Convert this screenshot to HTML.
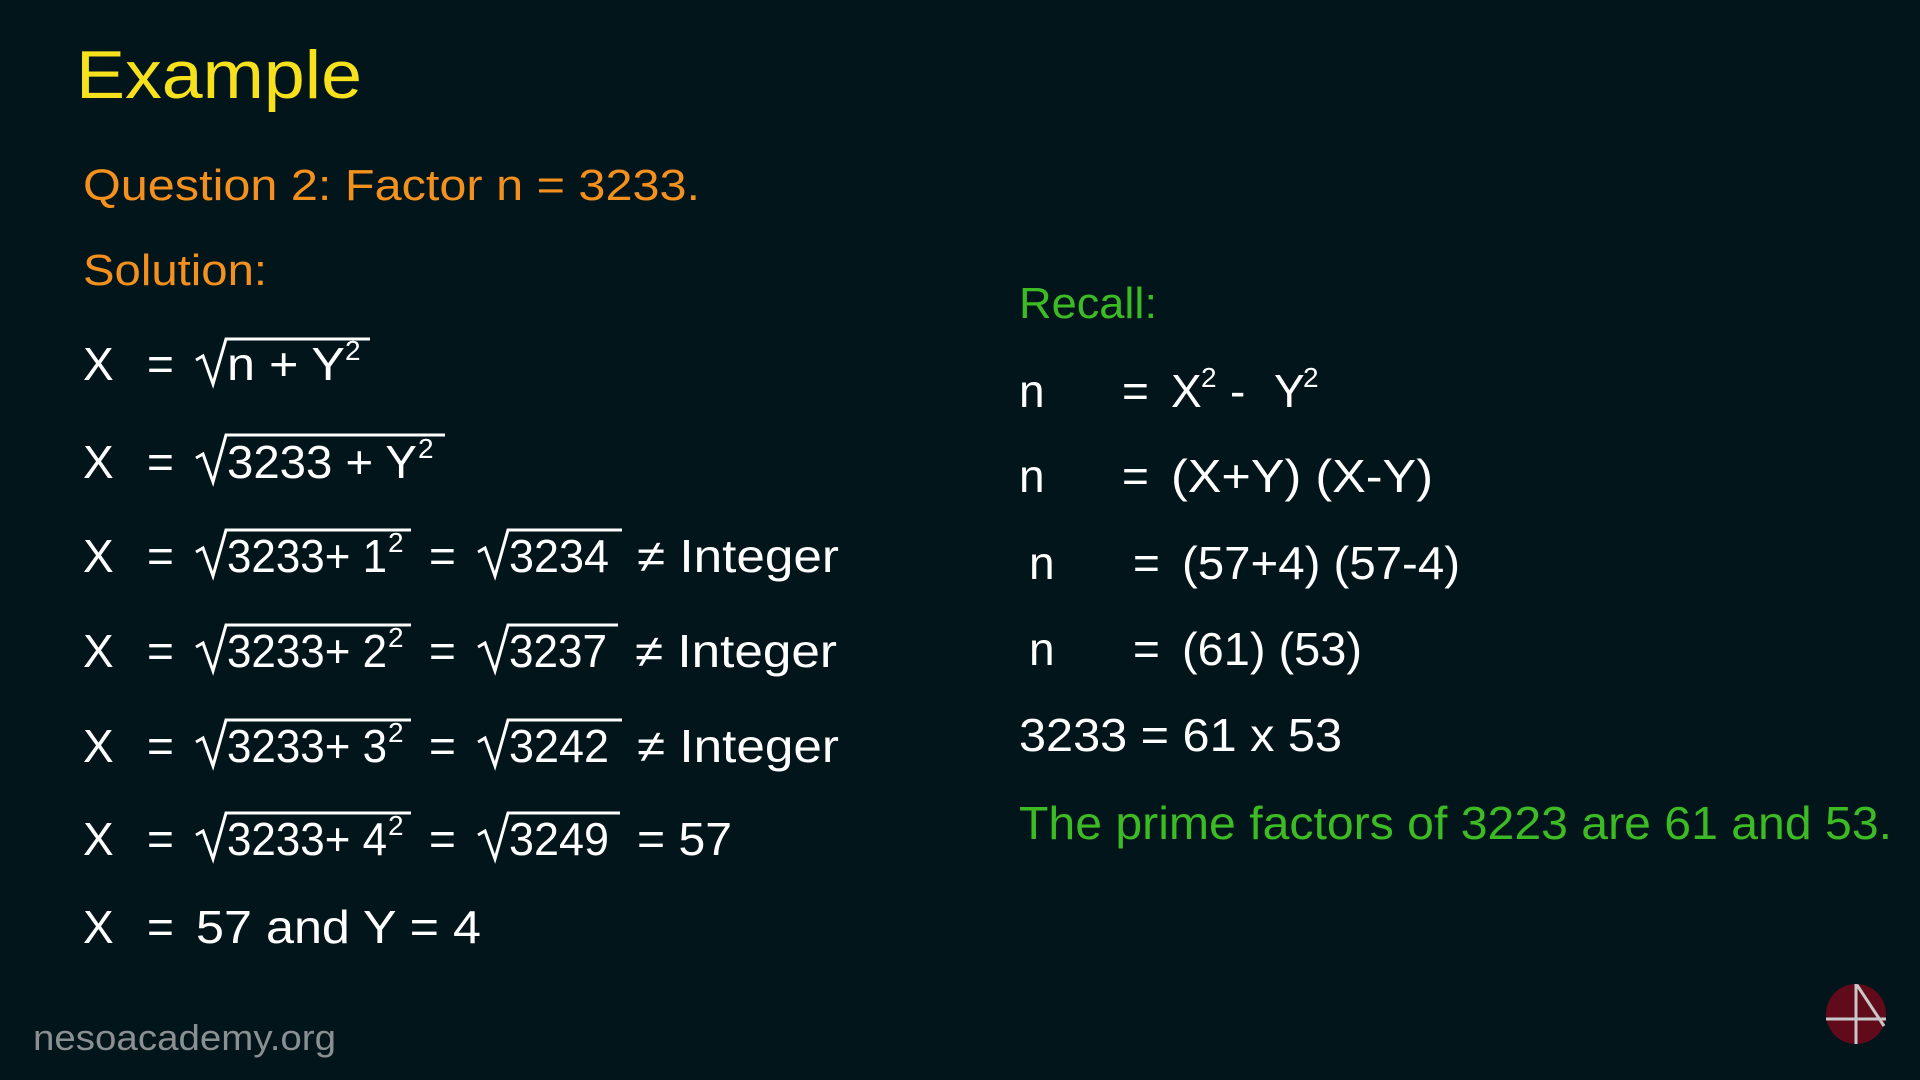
<!DOCTYPE html>
<html><head><meta charset="utf-8"><style>
html,body{margin:0;padding:0;background:#02151b;width:1920px;height:1080px;overflow:hidden}
svg{display:block}
text{font-family:"Liberation Sans",sans-serif}
</style></head><body>
<svg width="1920" height="1080" viewBox="0 0 1920 1080" xmlns="http://www.w3.org/2000/svg">
<rect width="1920" height="1080" fill="#02151b"/>
<text x="76" y="98" font-size="68" fill="#f7e11c" textLength="286" lengthAdjust="spacingAndGlyphs">Example</text>
<text x="83" y="200" font-size="44" fill="#f4911e" textLength="617" lengthAdjust="spacingAndGlyphs">Question 2: Factor n = 3233.</text>
<text x="83" y="285" font-size="44" fill="#f4911e" textLength="184" lengthAdjust="spacingAndGlyphs">Solution:</text>
<g fill="#fff" font-size="46" stroke="#fff" stroke-width="0">
<!-- L1 -->
<text x="83" y="380">X</text><text x="147" y="380">=</text>
<text x="227" y="380" textLength="118" lengthAdjust="spacingAndGlyphs">n + Y</text><text x="345" y="360" font-size="28">2</text>
<!-- L2 -->
<text x="83" y="478">X</text><text x="147" y="478">=</text>
<text x="227" y="478" textLength="190" lengthAdjust="spacingAndGlyphs">3233 + Y</text><text x="418" y="458" font-size="28">2</text>
<!-- L3-L6 -->
<text x="83" y="572">X</text><text x="147" y="572">=</text>
<text x="227" y="572" textLength="160" lengthAdjust="spacingAndGlyphs">3233+ 1</text><text x="388" y="552" font-size="28">2</text>
<text x="429" y="572">=</text><text x="509" y="572" textLength="100" lengthAdjust="spacingAndGlyphs">3234</text>
<text x="637" y="572" textLength="202" lengthAdjust="spacingAndGlyphs">≠ Integer</text>

<text x="83" y="667">X</text><text x="147" y="667">=</text>
<text x="227" y="667" textLength="160" lengthAdjust="spacingAndGlyphs">3233+ 2</text><text x="388" y="647" font-size="28">2</text>
<text x="429" y="667">=</text><text x="509" y="667" textLength="98" lengthAdjust="spacingAndGlyphs">3237</text>
<text x="635" y="667" textLength="202" lengthAdjust="spacingAndGlyphs">≠ Integer</text>

<text x="83" y="762">X</text><text x="147" y="762">=</text>
<text x="227" y="762" textLength="160" lengthAdjust="spacingAndGlyphs">3233+ 3</text><text x="388" y="742" font-size="28">2</text>
<text x="429" y="762">=</text><text x="509" y="762" textLength="100" lengthAdjust="spacingAndGlyphs">3242</text>
<text x="637" y="762" textLength="202" lengthAdjust="spacingAndGlyphs">≠ Integer</text>

<text x="83" y="855">X</text><text x="147" y="855">=</text>
<text x="227" y="855" textLength="160" lengthAdjust="spacingAndGlyphs">3233+ 4</text><text x="388" y="835" font-size="28">2</text>
<text x="429" y="855">=</text><text x="509" y="855" textLength="100" lengthAdjust="spacingAndGlyphs">3249</text>
<text x="637" y="855" textLength="95" lengthAdjust="spacingAndGlyphs">= 57</text>

<text x="83" y="943">X</text><text x="147" y="943">=</text>
<text x="196" y="943" textLength="285" lengthAdjust="spacingAndGlyphs">57 and Y = 4</text>
</g>
<g fill="none" stroke="#fff" stroke-width="3">
<path d="M196 360 L203 356 L213 384 L226 339 L370 339"/>
<path d="M196 458 L203 454 L213 482 L226 435 L445 435"/>
<path d="M196 552 L203 548 L213 576 L226 530 L411 530"/>
<path d="M478 552 L485 548 L495 576 L508 530 L622 530"/>
<path d="M196 647 L203 643 L213 671 L226 625 L411 625"/>
<path d="M478 647 L485 643 L495 671 L508 625 L618 625"/>
<path d="M196 742 L203 738 L213 766 L226 720 L411 720"/>
<path d="M478 742 L485 738 L495 766 L508 720 L622 720"/>
<path d="M196 835 L203 831 L213 859 L226 813 L411 813"/>
<path d="M478 835 L485 831 L495 859 L508 813 L620 813"/>
</g>
<text x="1019" y="318" font-size="44" fill="#3dbb24" textLength="138" lengthAdjust="spacingAndGlyphs">Recall:</text>
<g fill="#fff" font-size="46">
<text x="1019" y="407">n</text><text x="1122" y="407">=</text>
<text x="1171" y="407">X</text><text x="1201" y="387" font-size="28">2</text><text x="1230" y="407">-</text>
<text x="1274" y="407">Y</text><text x="1303" y="387" font-size="28">2</text>
<text x="1019" y="492">n</text><text x="1122" y="492">=</text>
<text x="1171" y="492" textLength="262" lengthAdjust="spacingAndGlyphs">(X+Y) (X-Y)</text>
<text x="1029" y="579">n</text><text x="1133" y="579">=</text>
<text x="1182" y="579" textLength="278" lengthAdjust="spacingAndGlyphs">(57+4) (57-4)</text>
<text x="1029" y="665">n</text><text x="1133" y="665">=</text>
<text x="1182" y="665" textLength="180" lengthAdjust="spacingAndGlyphs">(61) (53)</text>
<text x="1019" y="751" textLength="323" lengthAdjust="spacingAndGlyphs">3233 = 61 x  53</text>
</g>
<text x="1019" y="839" font-size="46" fill="#3dbb24" textLength="873" lengthAdjust="spacingAndGlyphs">The prime factors of 3223 are 61 and 53.</text>
<text x="33" y="1050" font-size="36" fill="#8a8f92" textLength="303" lengthAdjust="spacingAndGlyphs">nesoacademy.org</text>
<circle cx="1856" cy="1014" r="30" fill="#610a1a"/>
<g stroke="#c8c8c8" stroke-width="3" fill="none">
<line x1="1856" y1="984" x2="1856" y2="1044"/>
<line x1="1826" y1="1019" x2="1886" y2="1019"/>
<line x1="1857" y1="985" x2="1884" y2="1026"/>
</g>
</svg>
</body></html>
